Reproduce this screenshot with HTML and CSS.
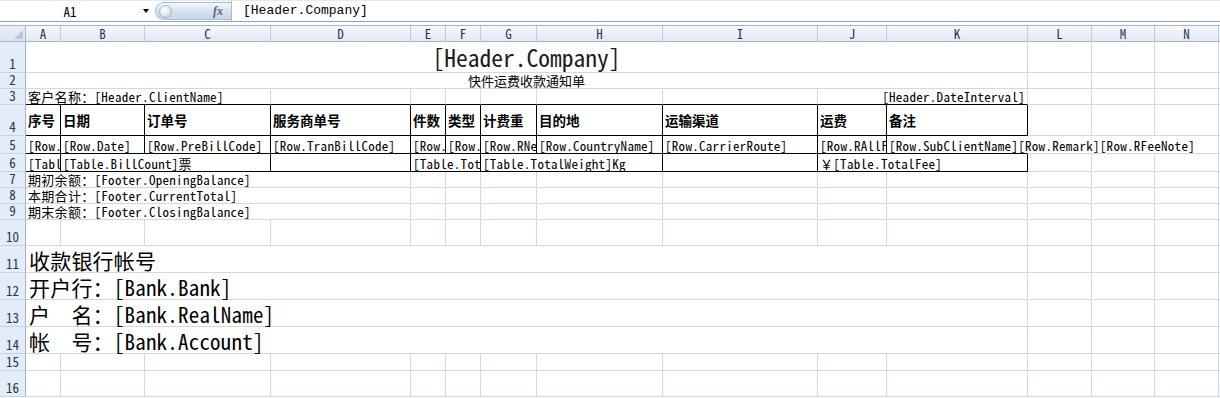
FILE: index.html
```html
<!DOCTYPE html>
<html lang="zh-CN">
<head>
  <meta charset="UTF-8" />
  <title>快件运费收款通知单</title>
  <link rel="stylesheet" href="styles.css">
</head>
<body>

  <div class="formula-bar">
    <div class="name-box">
      <span class="cell-ref">A1</span>
      <span class="drop"></span>
    </div>
    <div class="fx-pill">
      <span class="knob"></span>
      <span class="fx">fx</span>
    </div>
    <div class="formula-input">[Header.Company]</div>
  </div>

  <table class="sheet">
    <colgroup>
      <col style="width:26px">
      <col style="width:35px">
      <col style="width:84px">
      <col style="width:126px">
      <col style="width:140px">
      <col style="width:35px">
      <col style="width:35px">
      <col style="width:56px">
      <col style="width:126px">
      <col style="width:155px">
      <col style="width:69px">
      <col style="width:141px">
      <col style="width:64px">
      <col style="width:63px">
      <col style="width:64px">
      <col style="width:80px">
    </colgroup>
    <thead>
      <tr class="col-heads">
        <th class="corner"><span class="tri"></span></th>
        <th>A</th><th>B</th><th>C</th><th>D</th><th>E</th><th>F</th><th>G</th>
        <th>H</th><th>I</th><th>J</th><th>K</th><th>L</th><th>M</th><th>N</th><th></th>
      </tr>
    </thead>
    <tbody>
      <tr class="h31">
        <th>1</th>
        <td colspan="11" class="title">[Header.Company]</td>
        <td></td><td></td><td></td><td></td>
      </tr>
      <tr class="h16">
        <th>2</th>
        <td colspan="11" class="subtitle">快件运费收款通知单</td>
        <td></td><td></td><td></td><td></td>
      </tr>
      <tr class="h16">
        <th>3</th>
        <td colspan="3" class="bb">客户名称：[Header.ClientName]</td>
        <td class="bb"></td><td class="bb"></td><td class="bb"></td><td class="bb"></td><td class="bb"></td><td class="bb"></td>
        <td colspan="2" class="bb right">[Header.DateInterval]</td>
        <td></td><td></td><td></td><td></td>
      </tr>
      <tr class="h31 heads">
        <th>4</th>
        <td class="bx">序号</td>
        <td class="bx">日期</td>
        <td class="bx">订单号</td>
        <td class="bx">服务商单号</td>
        <td class="bx">件数</td>
        <td class="bx">类型</td>
        <td class="bx">计费重</td>
        <td class="bx">目的地</td>
        <td class="bx">运输渠道</td>
        <td class="bx">运费</td>
        <td class="bx">备注</td>
        <td></td><td></td><td></td><td></td>
      </tr>
      <tr class="h18">
        <th>5</th>
        <td class="bx clip">[Row.Index]</td>
        <td class="bx clip">[Row.Date]</td>
        <td class="bx clip">[Row.PreBillCode]</td>
        <td class="bx clip">[Row.TranBillCode]</td>
        <td class="bx clip">[Row.Count]</td>
        <td class="bx clip">[Row.Type]</td>
        <td class="bx clip">[Row.RNetWeight]</td>
        <td class="bx clip">[Row.CountryName]</td>
        <td class="bx clip">[Row.CarrierRoute]</td>
        <td class="bx clip">[Row.RAllFee]</td>
        <td class="bb nr">[Row.SubClientName][Row.Remark][Row.RFeeNote]</td>
        <td class="nr"></td><td class="nr"></td><td></td><td></td>
      </tr>
      <tr class="h18">
        <th>6</th>
        <td class="bx clip">[Table.Index]</td>
        <td colspan="2" class="bx">[Table.BillCount]票</td>
        <td class="bx"></td>
        <td colspan="2" class="bx clip">[Table.TotalCount]</td>
        <td colspan="2" class="bx">[Table.TotalWeight]Kg</td>
        <td class="bx"></td>
        <td colspan="2" class="bx">￥[Table.TotalFee]</td>
        <td></td><td></td><td></td><td></td>
      </tr>
      <tr class="h16">
        <th>7</th>
        <td colspan="4">期初余额：[Footer.OpeningBalance]</td>
        <td></td><td></td><td></td><td></td><td></td><td></td><td></td><td></td><td></td><td></td><td></td>
      </tr>
      <tr class="h16">
        <th>8</th>
        <td colspan="4">本期合计：[Footer.CurrentTotal]</td>
        <td></td><td></td><td></td><td></td><td></td><td></td><td></td><td></td><td></td><td></td><td></td>
      </tr>
      <tr class="h16">
        <th>9</th>
        <td colspan="4">期末余额：[Footer.ClosingBalance]</td>
        <td></td><td></td><td></td><td></td><td></td><td></td><td></td><td></td><td></td><td></td><td></td>
      </tr>
      <tr class="h26">
        <th>10</th>
        <td></td><td></td><td></td><td></td><td></td><td></td><td></td><td></td>
        <td></td><td></td><td></td><td></td><td></td><td></td><td></td>
      </tr>
      <tr class="h27 bank">
        <th>11</th>
        <td colspan="11">收款银行帐号</td>
        <td></td><td></td><td></td><td></td>
      </tr>
      <tr class="h27 bank">
        <th>12</th>
        <td colspan="11">开户行：[Bank.Bank]</td>
        <td></td><td></td><td></td><td></td>
      </tr>
      <tr class="h27 bank">
        <th>13</th>
        <td colspan="11">户　名：[Bank.RealName]</td>
        <td></td><td></td><td></td><td></td>
      </tr>
      <tr class="h27 bank">
        <th>14</th>
        <td colspan="11">帐　号：[Bank.Account]</td>
        <td></td><td></td><td></td><td></td>
      </tr>
      <tr class="h17">
        <th>15</th>
        <td></td><td></td><td></td><td></td><td></td><td></td><td></td><td></td>
        <td></td><td></td><td></td><td></td><td></td><td></td><td></td>
      </tr>
      <tr class="h26">
        <th>16</th>
        <td></td><td></td><td></td><td></td><td></td><td></td><td></td><td></td>
        <td></td><td></td><td></td><td></td><td></td><td></td><td></td>
      </tr>
    </tbody>
  </table>

</body>
</html>
```

FILE: styles.css
```css
body {
  margin: 0;
  background: #fff;
  overflow: hidden;
  font-family: "Noto Sans Mono CJK SC", "Liberation Mono", "Noto Sans CJK SC", monospace;
  color: #000;
}

/* formula bar */
.formula-bar {
  display: flex;
  height: 22px;
  box-sizing: border-box;
  background: #fff;
  border-top: 1px solid #e3e9f2;
  border-bottom: 1px solid #8ea4c1;
}
.name-box {
  width: 155px;
  display: flex;
  align-items: center;
}
.cell-ref {
  width: 140px;
  text-align: center;
  font-size: 13px;
}
.drop {
  width: 0;
  height: 0;
  border-left: 3px solid transparent;
  border-right: 3px solid transparent;
  border-top: 4px solid #000;
  margin-left: 3px;
}
.fx-pill {
  width: 76px;
  display: flex;
  align-items: center;
  justify-content: space-between;
  box-sizing: border-box;
  padding: 0 8px 0 3px;
  margin: 1px 0;
  border: 1px solid #aabbd3;
  border-right: none;
  border-radius: 10px 0 0 10px;
  background: linear-gradient(#f4f7fb, #d3e0f1 55%, #c5d6ed);
}
.knob {
  width: 11px;
  height: 11px;
  border-radius: 50%;
  border: 1px solid #a8b6c8;
  background: radial-gradient(circle at 40% 35%, #ffffff, #dfe4ea 60%, #c3cad4);
}
.fx {
  font: italic bold 12px "Liberation Serif", serif;
  color: #5a6576;
}
.formula-input {
  flex: 1;
  border-left: 1px solid #aabbd3;
  padding-left: 11px;
  font: 13px "Liberation Mono", monospace;
  line-height: 20px;
}

/* sheet */
.sheet {
  table-layout: fixed;
  border-collapse: separate;
  border-spacing: 0;
  width: 1299px;
  margin-top: 3px;
  border-top: 1px solid #9eb6ce;
}
.sheet td,
.sheet th {
  padding: 0 2px;
  border-right: 1px solid #d0d7e5;
  border-bottom: 1px solid #d0d7e5;
  white-space: nowrap;
  vertical-align: bottom;
  font-size: 13px;
  font-weight: normal;
  line-height: 12px;
  letter-spacing: 0.3px;
  text-align: left;
}
.sheet td {
  padding-bottom: 1px;
}
.sheet tbody th {
  background: #e4ecf7;
  border-right-color: #9eb6ce;
  border-bottom-color: #c5d3e3;
  text-align: center;
  color: #24384f;
  letter-spacing: 0;
  padding: 0 0 2px;
}
.col-heads th {
  height: 16px;
  box-sizing: border-box;
  background: linear-gradient(#f6f8fc, #e3e9f2);
  border-right-color: #c0cddd;
  border-bottom-color: #9eb6ce;
  text-align: center;
  vertical-align: middle;
  color: #24384f;
  line-height: 14px;
  letter-spacing: 0;
  padding: 0;
}
.col-heads .corner {
  position: relative;
  background: linear-gradient(#e8eef7, #dbe4f0);
  border-right-color: #9eb6ce;
}
.corner .tri {
  position: absolute;
  right: 2px;
  bottom: 2px;
  width: 0;
  height: 0;
  border-left: 9px solid transparent;
  border-bottom: 9px solid #b9c7d8;
}

.h16 { height: 16px; }
.h17 { height: 17px; }
.h18 { height: 18px; }
.h26 { height: 26px; }
.h27 { height: 27px; }
.h31 { height: 31px; }

.sheet .title {
  text-align: center;
  vertical-align: middle;
  font-size: 23.5px;
  line-height: 24px;
  letter-spacing: 0;
  color: #1c1c1c;
  padding: 0;
}
.sheet .subtitle {
  text-align: center;
  letter-spacing: 0;
}
.sheet .right { text-align: right; }
.sheet .bb { border-bottom-color: #000; }
.sheet .bx {
  border-right-color: #000;
  border-bottom-color: #000;
}
.sheet .nr { border-right-color: transparent; }
.sheet .clip { overflow: hidden; text-overflow: clip; }

.heads td {
  vertical-align: middle;
  font-family: "Noto Sans CJK SC", sans-serif;
  font-weight: bold;
  font-size: 13.5px;
  line-height: 16px;
  letter-spacing: 0;
}

.bank td {
  font-size: 21px;
  line-height: 22px;
  letter-spacing: 0.2px;
  padding: 0 2px 1px 3px;
}
```
